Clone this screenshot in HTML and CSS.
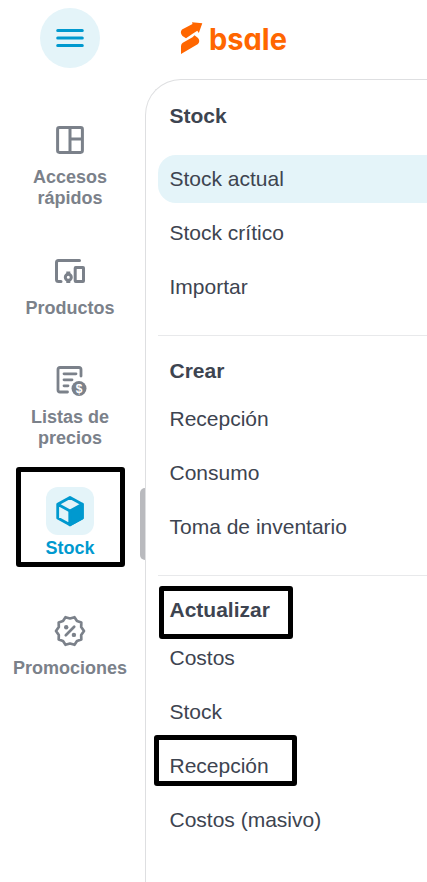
FILE: index.html
```html
<!DOCTYPE html>
<html lang="es">
<head>
<meta charset="utf-8">
<title>Stock</title>
<link rel="stylesheet" href="styles.css">
</head>
<body>
<header class="topbar">
  <button class="menu-button" aria-label="Menú">
    <svg width="30" height="20" viewBox="0 0 30 20" stroke="currentColor" stroke-width="3" stroke-linecap="round"><path d="M2.7 2.5h24.6M2.7 10h24.6M2.7 17.5h24.6"/></svg>
  </button>
  <svg class="logo" width="120" height="50" viewBox="0 0 120 50" role="img">
    <path d="M4 11.500 14.5 6 14 4.200 24.300 5.300 20.800 15 19.300 12.800 15 15.500 8 20.300 4.500 18Q1.500 14.500 4 11.500Z"/>
    <path d="M4.800 24.800 14.500 19.300 16.500 17.300 20 20Q22.500 23 20 26L3 36V28Q3.200 25.800 4.800 24.800Z"/>
    <text class="logo-text" transform="translate(31 31.800)" textLength="78" lengthAdjust="spacingAndGlyphs">bsale</text>
  </svg>
</header>
<div class="layout">
  <nav class="rail">
    <a class="rail-item quick">
      <svg class="icon" width="36" height="36" viewBox="0 0 36 36" fill="none" stroke="currentColor" stroke-width="3"><rect x="5.6" y="5.6" width="24.8" height="24.8" rx="1.8"/><path d="M18 5.5v25M18 17h12"/></svg>
      <span>Accesos<br>rápidos</span>
    </a>
    <a class="rail-item products">
      <svg class="icon" width="36" height="36" viewBox="0 0 36 36" fill="none" stroke="currentColor" stroke-width="3"><path d="M27.500 7.500H6.500Q4.500 7.500 4.500 9.500V26.500Q4.500 28.500 6.500 28.500H9" stroke-linecap="round"/><rect x="23.200" y="14.500" width="8.300" height="14" rx=".5"/><circle cx="16.300" cy="24.300" r="3"/><path d="M14.300 19.800h4M14.300 28.800h4" stroke-width="2.600"/></svg>
      <span>Productos</span>
    </a>
    <a class="rail-item prices">
      <svg class="icon" width="36" height="36" viewBox="0 0 36 36" fill="none" stroke="currentColor" stroke-width="2.800" stroke-linecap="round"><path d="M29 14V7.500Q29 5.500 27 5.500H8Q6 5.500 6 7.500V28Q6 30 8 30H15.500M12 11.800h12M12 17.800h8M12 23.800h4"/><circle cx="27" cy="26.500" r="7.500" fill="currentColor" stroke="none"/><text class="coin" x="27" y="30.700">$</text></svg>
      <span>Listas de<br>precios</span>
    </a>
    <a class="rail-item stock">
      <span class="tile"><svg class="icon" width="36" height="36" viewBox="0 0 36 36" fill="none" stroke="currentColor" stroke-width="2.800" stroke-linejoin="round"><path d="M18 4.400 30.300 11.200V25L18 31.800 5.700 25V11.200ZM5.700 11.200 18 18V31.800"/><path d="M18 18 30.300 11.200V25L18 31.800Z" fill="currentColor"/></svg></span>
      <span>Stock</span>
    </a>
    <a class="rail-item promos">
      <svg class="icon" width="36" height="36" viewBox="0 0 36 36" fill="none" stroke="currentColor" stroke-width="2.700" stroke-linejoin="round"><path d="M18 5.500 22.500 4.200 25 8 29.300 9.500 29.200 14 32 18 29.200 22 29.300 26.500 25 28 22.500 31.800 18 30.500 13.500 31.800 11 28 6.700 26.500 6.800 22 4 18 6.800 14 6.700 9.500 11 8 13.500 4.200Z"/><path d="M13.800 22.200 22.200 13.800" stroke-linecap="round"/><circle cx="14.200" cy="14.200" r="2.200" fill="currentColor" stroke="none"/><circle cx="21.900" cy="21.900" r="2.200" fill="currentColor" stroke="none"/></svg>
      <span>Promociones</span>
    </a>
  </nav>
  <main class="panel">
    <section class="group">
      <h2>Stock</h2>
      <a class="entry active">Stock actual</a>
      <a class="entry">Stock crítico</a>
      <a class="entry">Importar</a>
    </section>
    <section class="group">
      <h2>Crear</h2>
      <a class="entry">Recepción</a>
      <a class="entry">Consumo</a>
      <a class="entry">Toma de inventario</a>
    </section>
    <section class="group">
      <h2>Actualizar</h2>
      <a class="entry">Costos</a>
      <a class="entry">Stock</a>
      <a class="entry">Recepción</a>
      <a class="entry">Costos (masivo)</a>
    </section>
  </main>
</div>
<div class="scroll-thumb"></div>
<div class="mark mark-stock"></div>
<div class="mark mark-update"></div>
<div class="mark mark-reception"></div>
</body>
</html>
```

FILE: styles.css
```css
* { box-sizing: border-box; }
body {
  margin: 0;
  height: 882px;
  position: relative;
  overflow: hidden;
  background: #fff;
  color: #3d4450;
  font-family: "Liberation Sans", Arial, sans-serif;
}
.topbar { display: flex; height: 79px; padding: 8px 0 0 40px; }
.menu-button {
  display: flex;
  align-items: center;
  justify-content: center;
  width: 60px;
  height: 60px;
  padding: 0;
  border: 0;
  border-radius: 50%;
  background: #e4f4f9;
  color: #0099cf;
}
.logo { margin: 10px 0 0 78px; fill: #ff6600; overflow: visible; }
.logo-text {
  font: 700 30px/1 Inter, sans-serif;
  font-feature-settings: "cv11";
}
.layout { display: flex; height: 803px; }
.rail { flex: none; width: 145px; padding: 43px 5px 0 0; }
.rail-item {
  display: flex;
  flex-direction: column;
  align-items: center;
  text-align: center;
  color: #7b818a;
  font-size: 18px;
  font-weight: 700;
  line-height: 21px;
}
.icon { display: block; }
.quick { height: 131px; gap: 9px; }
.products { height: 109px; gap: 9px; }
.prices { height: 125px; gap: 9px; }
.stock { height: 126px; gap: 3px; color: #0099cf; }
.promos { gap: 9px; }
.tile {
  display: flex;
  align-items: center;
  justify-content: center;
  width: 48px;
  height: 48px;
  border-radius: 12px;
  background: #e4f4f9;
}
.coin {
  fill: #fff;
  stroke: none;
  text-anchor: middle;
  font: 700 12px "Liberation Sans", sans-serif;
}
.panel {
  flex: 1;
  padding: 12px 0 0 12px;
  border: solid #dedfe1;
  border-width: 1px 0 0 1px;
  border-top-left-radius: 36px;
}
.group { padding-bottom: 24px; }
.group + .group { border-top: 1px solid #e8e9eb; padding-top: 11px; padding-bottom: 24px; }
.group + .group + .group { padding-top: 10px; }
h2 {
  margin: 0 0 15px;
  padding-left: 11.500px;
  font-size: 21px;
  line-height: 48px;
}
.group + .group h2 { margin-bottom: 0; }
.entry {
  display: block;
  height: 48px;
  margin-bottom: 6px;
  padding-left: 11.500px;
  font-size: 21px;
  line-height: 48px;
}
.entry:last-child { margin-bottom: 0; }
.active { background: #e4f4f9; border-radius: 18px 0 0 18px; }
.scroll-thumb {
  position: absolute;
  left: 140px;
  top: 488px;
  width: 5px;
  height: 72px;
  border-radius: 5px 0 0 5px;
  background: #b9babe;
}
.mark { position: absolute; border: 5px solid #000; border-radius: 3px; }
.mark-stock { left: 16px; top: 467px; width: 109px; height: 100px; }
.mark-update { left: 159px; top: 586px; width: 134px; height: 53px; }
.mark-reception { left: 154px; top: 735px; width: 143px; height: 51px; }
```
